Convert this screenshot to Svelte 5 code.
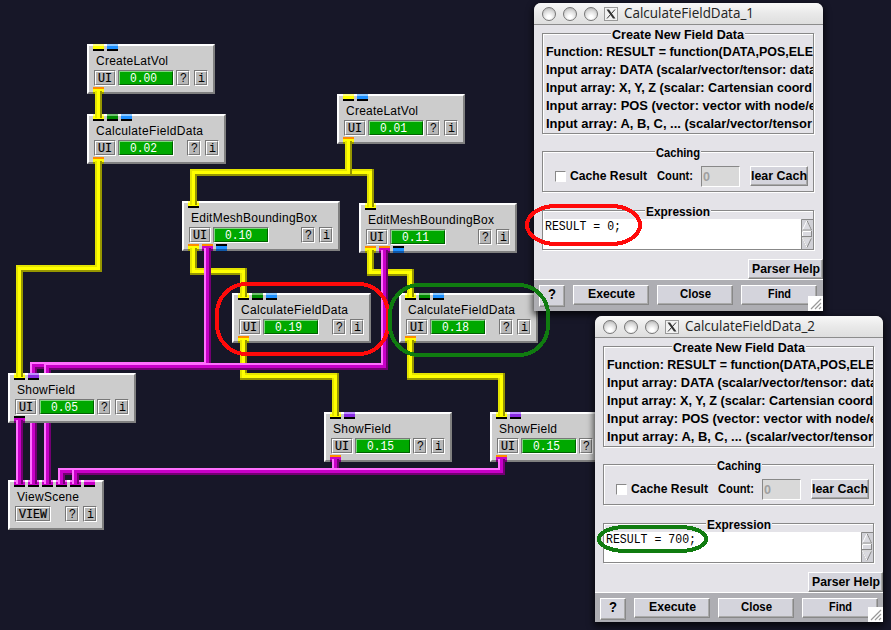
<script>
  const Y = 'yellow', B = 'blue', G = 'green', P = 'purple', M = 'magenta';
  const widths = { CreateLatVol: 72, CalculateFieldData: 107, EditMeshBoundingBox: 126, ShowField: 58, ViewScene: 62 };

  // Port: [colour, connected, ready]; inputs sit on the top edge, outputs on the bottom edge
  const nodes = [
    { x: 87, y: 44, w: 128, name: 'CreateLatVol', time: '0.00', ins: [[Y], [B]], outs: [[Y, 1, 1]] },
    { x: 87, y: 114, w: 139, name: 'CalculateFieldData', time: '0.02', ins: [[Y, 1], [G], [B]], outs: [[Y, 1, 1]] },
    { x: 337, y: 94, w: 128, name: 'CreateLatVol', time: '0.01', ins: [[Y], [B]], outs: [[Y, 1, 1]] },
    { x: 182, y: 201, w: 158, name: 'EditMeshBoundingBox', time: '0.10', ins: [[Y, 1]], outs: [[Y, 1, 1], [M, 1, 1], [B]] },
    { x: 359, y: 203, w: 158, name: 'EditMeshBoundingBox', time: '0.11', ins: [[Y, 1]], outs: [[Y, 1, 1], [M, 1, 1], [B]] },
    { x: 232, y: 293, w: 139, name: 'CalculateFieldData', time: '0.19', ins: [[Y, 1], [G], [B]], outs: [[Y, 1, 1]] },
    { x: 399, y: 293, w: 139, name: 'CalculateFieldData', time: '0.18', ins: [[Y, 1], [G], [B]], outs: [[Y, 1, 1]] },
    { x: 8, y: 373, w: 128, name: 'ShowField', time: '0.05', ins: [[Y, 1], [P]], outs: [[M, 1]] },
    { x: 324, y: 412, w: 128, name: 'ShowField', time: '0.15', ins: [[Y, 1], [P]], outs: [[M, 1, 1]] },
    { x: 490, y: 412, w: 128, name: 'ShowField', time: '0.15', ins: [[Y, 1], [P]], outs: [[M, 1, 1]] },
    { x: 8, y: 480, w: 96, name: 'ViewScene', view: true, ins: [[M, 1], [M, 1], [M, 1], [M, 1], [M, 1], [M]], outs: [] }
  ];

  const pipes = [
    [Y, 'M98.5 92V116'],
    [Y, 'M98.5 162V268.5H19.5V375'],
    [Y, 'M348.5 142V172.5H370.5V205'],
    [Y, 'M348.5 142V172.5H193.5V203'],
    [Y, 'M193.5 249V271.5H243.5V295'],
    [Y, 'M370.5 251V272.5H410.5V295'],
    [Y, 'M243.5 341V376.5H335.5V414'],
    [Y, 'M410.5 341V376.5H501.5V414'],
    [M, 'M207.5 249V365.5H33.5V482'],
    [M, 'M384.5 251V366.5H47.5V482'],
    [M, 'M19.5 421V482'],
    [M, 'M335.5 460V471.5H61.5V482'],
    [M, 'M501.5 460V471.5H75.5V482']
  ];

  const info = [
    ['Function: RESULT = function(DATA,POS,ELE', 267],
    ['Input array: DATA (scalar/vector/tensor: data', 270],
    ['Input array: X, Y, Z (scalar: Cartensian coord', 266],
    ['Input array: POS (vector: vector with node/e', 270],
    ['Input array: A, B, C, ... (scalar/vector/tensor', 266]
  ];

  const windows = [
    { x: 534, y: 3, w: 289, h: 308, title: 'CalculateFieldData_1', expr: 'RESULT = 0;', ew: 76 },
    { x: 595, y: 316, w: 288, h: 306, title: 'CalculateFieldData_2', expr: 'RESULT = 700;', ew: 90 }
  ];
</script>

{#snippet label(s, w, cls, adjust = 'spacingAndGlyphs')}
  <svg class="label {cls}" width={w} height="14"><text x="0" y="11" textLength={w} lengthAdjust={adjust}>{s}</text></svg>
{/snippet}

<div class="desk">
  <svg class="layer" width="891" height="630">
    {#each pipes as [color, d]}
      <g class="pipe {color}">
        <path class="lo" {d} />
        <path class="hi" {d} transform="translate(-1 -1)" />
        <path class="mid" {d} />
      </g>
    {/each}
  </svg>

  {#each nodes as n}
    <section class="node" style="left:{n.x}px;top:{n.y}px;width:{n.w}px">
      <div class="ports in">
        {#each n.ins as p}<i class="port {p[0]}" class:on={p[1]}></i>{/each}
      </div>
      <div class="name">{@render label(n.name, widths[n.name], 'sans', 'spacing')}</div>
      <div class="row">
        {#if n.view}
          <div class="key view"><b>{@render label('VIEW', 28, 'mono dark')}</b></div>
        {:else}
          <div class="key ui"><b>{@render label('UI', 14, 'mono dark')}</b></div>
          <div class="meter"><b>{@render label(n.time, 27, 'mono white')}</b></div>
        {/if}
        <span class="fill"></span>
        <div class="key"><b>{@render label('?', 7, 'mono')}</b></div>
        <div class="key last"><b>{@render label('i', 7, 'mono')}</b></div>
      </div>
      <div class="ports out">
        {#each n.outs as p}<i class="port {p[0]}" class:on={p[1]} class:ready={p[2]}></i>{/each}
      </div>
    </section>
  {/each}

  {#each windows as v}
    <section class="win" style="left:{v.x}px;top:{v.y}px;width:{v.w}px;height:{v.h}px">
      <header>
        <i class="dot"></i><i class="dot"></i><i class="dot"></i>
        <svg class="xicon" width="14" height="14" viewBox="0 0 14 14">
          <rect x=".5" y=".5" width="13" height="13" fill="#f2f2f2" stroke="#999" />
          <path d="M2.500 2.5H5L11.500 11.5H9Z" fill="#333" />
          <path d="M11 2.5L3 11.5" stroke="#333" stroke-width="1" />
        </svg>
        {@render label(v.title, 130, 'title')}
      </header>
      <div class="body">
        <div class="frame info">
          <div class="cap">{@render label('Create New Field Data', 132, 'bold')}</div>
          {#each info as [s, w]}<div class="line">{@render label(s, w, 'bold')}</div>{/each}
        </div>
        <div class="frame cache">
          <div class="cap">{@render label('Caching', 44, 'bold')}</div>
          <span class="check"></span>
          {@render label('Cache Result', 77, 'bold')}
          <span class="count">{@render label('Count:', 36, 'bold')}</span>
          <span class="entry">{@render label('0', 7, 'bold off')}</span>
          <span class="btn clear">{@render label('lear Cach', 56, 'bold')}</span>
        </div>
        <div class="frame expr">
          <div class="cap">{@render label('Expression', 64, 'bold')}</div>
          <div class="area">{@render label(v.expr, v.ew, 'mono')}</div>
          <svg class="scroll" width="12" height="30" viewBox="0 0 12 30">
            <rect width="12" height="30" fill="#d0d0d6" />
            <path d="M.5 30V.5H12" fill="none" stroke="#888" />
            <path d="M1.5 11L6 1.5L10.5 11Z" fill="#dadae0" stroke="#fff" />
            <path d="M6 1.5L10.5 11H1.5" fill="none" stroke="#888" />
            <rect x="1.5" y="12.5" width="9" height="5" fill="#dadae0" stroke="#888" />
            <path d="M1.5 17V12.5H10" fill="none" stroke="#fff" />
            <path d="M1.5 19L6 28.5L10.5 19Z" fill="#dadae0" stroke="#888" />
            <path d="M10.5 19H1.5L6 28.5" fill="none" stroke="#fff" />
          </svg>
        </div>
        <div class="help"><span class="btn">{@render label('Parser Help', 68, 'bold')}</span></div>
      </div>
      <footer>
        <span class="btn q">{@render label('?', 8, 'bold big')}</span>
        <span class="btn">{@render label('Execute', 47, 'bold')}</span>
        <span class="btn">{@render label('Close', 31, 'bold')}</span>
        <span class="btn">{@render label('Find', 23, 'bold')}</span>
      </footer>
      <svg class="grip" width="15" height="15" viewBox="0 0 15 15">
        <rect width="15" height="15" fill="#fff" />
        <path d="M3 13L13 3M7 13L13 7M11 13L13 11" stroke="#999" stroke-width="1.2" />
      </svg>
    </section>
  {/each}

  <svg class="layer marks" width="891" height="630">
    <rect class="r" x="217" y="284" width="171" height="70" rx="29" ry="30" />
    <rect class="g" x="390" y="285" width="158" height="70" rx="29" ry="30" />
    <rect class="r" x="527" y="206" width="113" height="38" rx="29" ry="19" />
    <rect class="g" x="599" y="527" width="107" height="24" rx="26" ry="12" />
  </svg>
</div>

<style>
  :global(body) { margin: 0; background: #171728; }
  .desk { position: relative; width: 891px; height: 630px; overflow: hidden; background: #171728; }
  .layer { position: absolute; inset: 0; }
  .label { display: block; flex: none; overflow: visible; fill: #000; }
  .sans { font: 12px "Liberation Sans", Arial, sans-serif; }
  .bold { font: bold 12px "Liberation Sans", Arial, sans-serif; }
  .big { font-size: 15px; }
  .mono { font: 12px "Liberation Mono", "Courier New", monospace; }
  .dark { stroke: #000; stroke-width: .2; }
  .white { fill: #fff; font-size: 13px; }
  .off { fill: #a0a0a0; }
  .title { font: 14px "Open Sans", "Noto Sans", sans-serif; fill: #222; }

  .pipe path { fill: none; stroke-linejoin: miter; shape-rendering: crispEdges; }
  .lo { stroke: var(--lo); stroke-width: 7; }
  .hi { stroke: var(--hi); stroke-width: 5; }
  .mid { stroke: var(--c); stroke-width: 3; }
  .yellow { --c: #ff0; --hi: #e4e400; --lo: #969600; --tint: #ffff80; }
  .magenta { --c: #c800c8; --hi: #ff70ff; --lo: #730073; --tint: #ff70ff; }
  .blue { --c: #1e90ff; --tint: #8cc8ff; --lo: #1058a8; }
  .green { --c: #008b00; --tint: #70c070; }
  .purple { --c: #8a2be2; --tint: #c090ff; }

  .node {
    position: absolute; box-sizing: border-box; height: 50px; display: flex; flex-direction: column;
    background: #ccc; border: 2px solid; border-color: #fff #808080 #808080 #fff;
  }
  .ports { display: flex; gap: 3px; padding-left: 4px; }
  .in { height: 7px; margin-top: -2px; flex: none; }
  .port { position: relative; width: 11px; height: 7px; background: linear-gradient(var(--tint) 2px, var(--c) 2px 5px, #000 5px); }
  .out .port { background: linear-gradient(#000 2px, var(--c) 2px 5px, var(--lo) 5px); }
  .out .ready { background: linear-gradient(#ff8c00 2px, var(--c) 2px 5px, var(--lo) 5px); }
  .port.on::after {
    content: ""; position: absolute; left: 2px; width: 7px; height: 4px;
    background: linear-gradient(90deg, var(--hi) 2px, var(--c) 2px 5px, var(--lo) 5px);
  }
  .in .port::after { top: 0; }
  .out .port::after { top: 4px; height: 3px; }
  .name { height: 16px; margin: 3px 0 0 7px; flex: none; }
  .row { display: flex; height: 16px; padding: 0 5px; flex: none; }
  .fill { flex: 1; }
  .key, .meter { box-sizing: border-box; border: 1px solid; border-color: #777 #fff #fff #777; }
  .key { width: 14px; }
  .ui { width: 22px; margin-right: 2px; }
  .view { width: 36px; }
  .last { margin-left: 4px; }
  .meter { width: 56px; }
  b { box-sizing: border-box; display: flex; justify-content: center; width: 100%; height: 14px; background: #b8b8b8; border: 1px solid; border-color: #fff #777 #777 #fff; }
  b .label { margin-top: -1px; }
  .meter b { background: #00a800; border-color: #80d880 #006000 #006000 #80d880; justify-content: flex-start; padding-left: 10px; }
  .out { height: 7px; margin-top: 1px; }

  .win {
    position: absolute; display: flex; flex-direction: column; background: #e4e3e8;
    border-radius: 7px 7px 0 0; box-shadow: 0 3px 7px 1px rgba(0, 0, 0, .75);
  }
  header {
    box-sizing: border-box; display: flex; align-items: center; height: 22px; flex: none; padding-left: 8px; gap: 7px;
    border-bottom: 1px solid #8c8c8c; border-radius: 7px 7px 0 0; background: linear-gradient(#f8f8f8, #e9e9e9 50%, #dedede);
  }
  .dot { box-sizing: border-box; width: 14px; height: 14px; border-radius: 50%; border: 1px solid #777; background: radial-gradient(circle at 50% 75%, #fff 15%, #ddd 55%, #a8a8a8); }
  .xicon { margin-left: -1px; }
  header .title { margin: 1px 0 0 -1px; }
  .body { display: flex; flex-direction: column; padding: 8px 8px 0; flex: none; height: 246px; }
  .frame { position: relative; box-sizing: border-box; flex: none; border: 1px solid #888; box-shadow: inset 1px 1px #fff, 1px 1px #fff; margin-right: 1px; }
  .cap { position: absolute; top: -6px; left: 50%; transform: translateX(-50%); padding: 0 1px; background: #e4e3e8; z-index: 1; }
  .info { height: 101px; padding: 11px 0 0 3px; }
  .line { height: 18px; overflow: hidden; }
  .cache { height: 41px; margin-top: 17px; display: flex; align-items: center; padding: 12px 0 0 12px; }
  .check { box-sizing: border-box; width: 11px; height: 11px; background: #fff; border: 1px solid; border-color: #888 #fff #fff #888; margin: -3px 4px 0 0; }
  .cache > .label { margin-top: -3px; }
  .count { margin: -3px 0 0 10px; }
  .entry { box-sizing: border-box; width: 39px; height: 21px; margin: -2px 0 0 8px; padding: 3px 0 0 1px; background: #d9d9d9; border: 1px solid; border-color: #888 #fff #fff #888; }
  .btn {
    box-sizing: border-box; display: flex; justify-content: center; align-items: center; height: 20px; flex: none;
    background: #d4d4dc; border: 1px solid; border-color: #fff #888 #888 #fff; box-shadow: inset -1px -1px #aaa;
  }
  .clear { width: 58px; margin: -4px 0 0 10px; overflow: hidden; }
  .expr { height: 40px; margin-top: 18px; display: flex; padding-top: 8px; }
  .area { flex: 1; background: #fff; padding-left: 2px; }
  .scroll { flex: none; }
  .help { display: flex; justify-content: flex-end; margin: 9px -8px 0 0; }
  .help .btn { width: 75px; }
  footer { box-sizing: border-box; flex: 1; display: flex; gap: 8px; padding: 5px 0 0 5px; background: #aeaeb3; border-top: 1px solid #fff; }
  footer .btn { width: 76px; margin-top: 0; }
  footer .btn .label { margin-top: -2px; }
  footer .q { width: 26px; height: 22px; }
  .grip { position: absolute; right: 0; bottom: 0; }
  .marks rect { fill: none; stroke-width: 4; shape-rendering: crispEdges; }
  .r { stroke: #ff0a0a; }
  .g { stroke: #107c10; }
</style>
